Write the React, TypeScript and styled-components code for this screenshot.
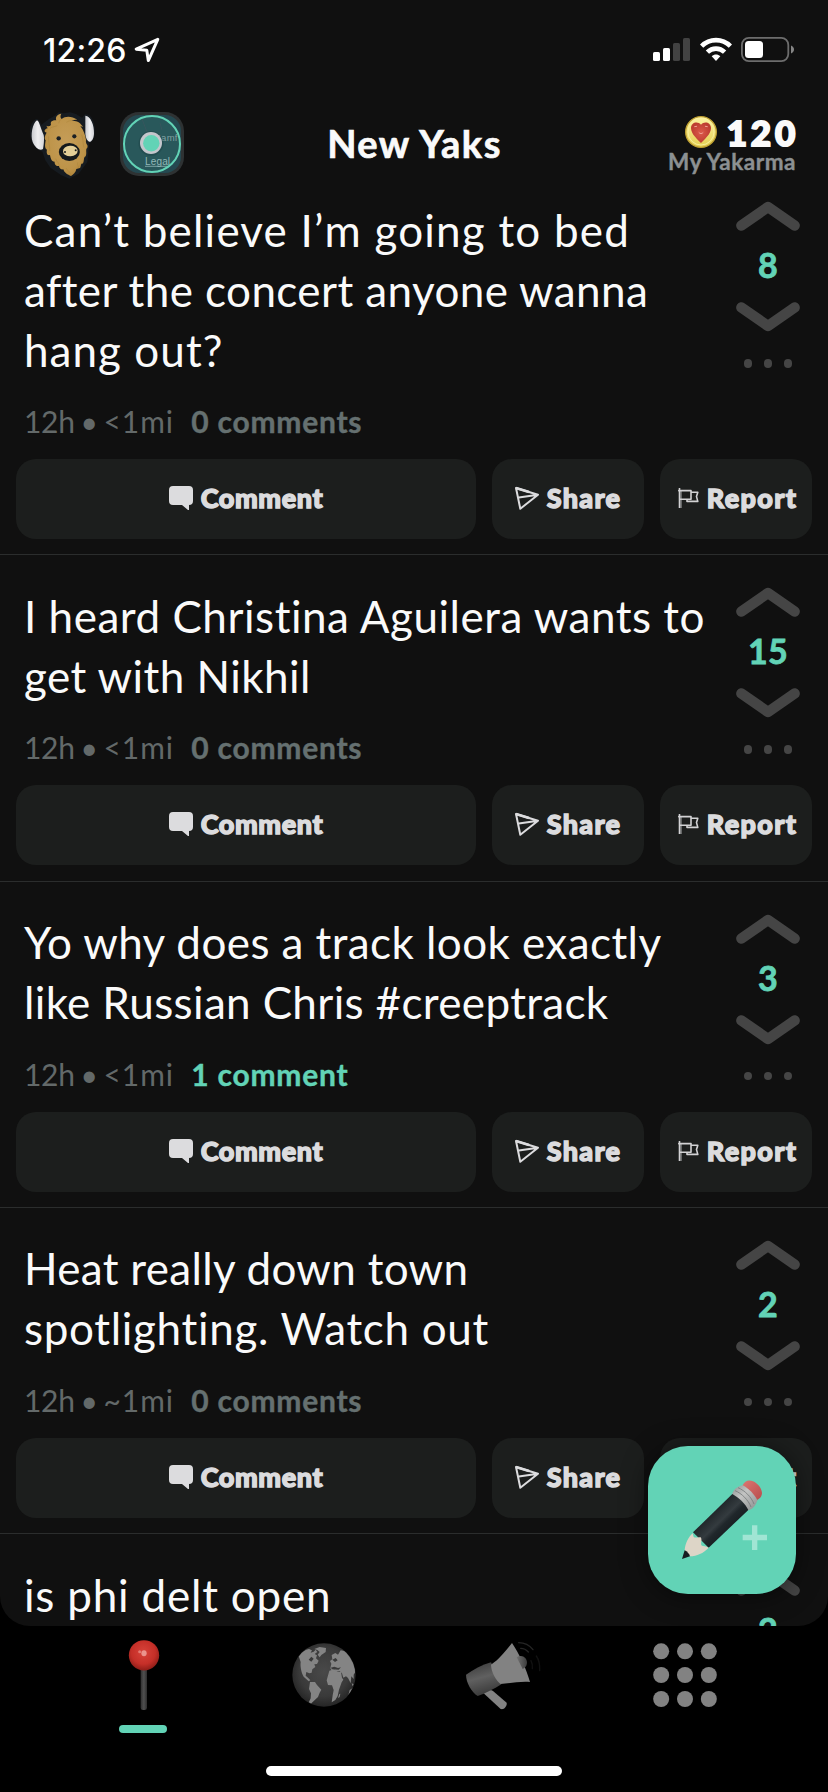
import React from 'react';
import styled, { createGlobalStyle } from 'styled-components';

const mint = '#62d3b6';
const panel = '#101010';

const GlobalStyle = createGlobalStyle`
  * { box-sizing: border-box; }
  body {
    margin: 0;
    background: #000;
    color: #fafafa;
    font-family: Lato, 'Open Sans', sans-serif;
    font-variant-ligatures: none;
  }
  svg { display: block; flex: none; }
`;

const Screen = styled.div`
  display: flex;
  flex-direction: column;
  width: 828px;
  height: 1792px;
  overflow: hidden;
  background: #000;
`;

const Panel = styled.main`
  position: relative;
  display: flex;
  flex-direction: column;
  height: 1626px;
  flex: none;
  overflow: hidden;
  background: ${panel};
  border-radius: 0 0 30px 30px;
`;

/* ---------- status bar ---------- */

const StatusBar = styled.div`
  display: flex;
  align-items: flex-start;
  height: 88px;
  flex: none;
  padding: 37px 34px 0 43px;
`;

const Clock = styled.span`
  margin-right: 7px;
  font: 500 32px/27px Inter, sans-serif;
  letter-spacing: 0.2px;
  color: #fff;
`;

const StatusIcons = styled.div`
  display: flex;
  gap: 9.5px;
  margin-left: auto;
`;

/* ---------- header ---------- */

const Header = styled.header`
  display: grid;
  grid-template-columns: 1fr auto 1fr;
  align-items: center;
  height: 112px;
  flex: none;
  padding: 0 32px 0 28px;
`;

const HeaderLeft = styled.div`
  display: flex;
  align-items: center;
  gap: 24px;
`;

const Title = styled.h1`
  margin: 0 0 3px 5px;
  font-size: 38px;
  font-weight: 700;
  line-height: 46px;
  letter-spacing: 1.5px;
  -webkit-text-stroke: 0.7px #fafafa;
`;

const Karma = styled.div`
  display: flex;
  flex-direction: column;
  align-items: flex-end;
  padding-top: 1px;
`;

const KarmaScore = styled.div`
  display: flex;
  align-items: center;
  gap: 10px;
  height: 34px;
  font-size: 35px;
  font-weight: 900;
  line-height: 32px;
  letter-spacing: 3.8px;
  margin-right: -3px;
  -webkit-text-stroke: 2px #fafafa;
`;

const KarmaLabel = styled.div`
  font-size: 22.5px;
  font-weight: 700;
  line-height: 26px;
  letter-spacing: 0.55px;
  color: #8c9092;
  -webkit-text-stroke: 0.4px #8c9092;
`;

/* ---------- feed ---------- */

const Feed = styled.section`
  flex: 1;
  min-height: 0;
  overflow: hidden;
`;

const FeedList = styled.div`
  margin-top: -31px;
`;

const PostCard = styled.article`
  border-bottom: 1px solid #2b2d2d;
  padding-bottom: 15.33px;
`;

const PostBody = styled.div`
  display: flex;
  justify-content: space-between;
  padding: 29px 28px 18px 24px;
`;

const Message = styled.p`
  margin: 0 0 21.5px;
  padding-top: 1.5px;
  font-size: 44px;
  line-height: 60px;
`;

const Line = styled.span<{ $track: number }>`
  display: block;
  white-space: nowrap;
  letter-spacing: ${(p) => p.$track}px;
`;

const Meta = styled.div`
  display: flex;
  font-size: 30px;
  line-height: 40px;
  color: #636969;
  white-space: nowrap;
`;

const Age = styled.span`
  letter-spacing: -0.3px;
  word-spacing: -1.6px;
`;

const Distance = styled.span`
  margin-left: 6px;
  letter-spacing: 0.9px;
`;

const CommentCount = styled.span<{ $active: boolean }>`
  margin-left: 17.5px;
  font-weight: 700;
  letter-spacing: 0.75px;
  color: ${(p) => (p.$active ? mint : '#657070')};
  -webkit-text-stroke: 0.4px ${(p) => (p.$active ? mint : '#657070')};
`;

const Votes = styled.div`
  display: flex;
  flex-direction: column;
  align-items: center;
  width: 64px;
  height: 176px;
  margin-top: 3px;
`;

const Score = styled.span`
  height: 71px;
  font-size: 34px;
  font-weight: 700;
  line-height: 67px;
  letter-spacing: 0.4px;
  color: ${mint};
  -webkit-text-stroke: 0.8px ${mint};
`;

const MoreDots = styled.div`
  display: flex;
  gap: 11.5px;
  margin-top: 27px;
`;

const MoreDot = styled.i`
  width: 8.5px;
  height: 8.5px;
  border-radius: 50%;
  background: #454545;
`;

const Actions = styled.div`
  display: grid;
  grid-template-columns: 460px 152px 152px;
  gap: 16px;
  padding: 0 16px;
`;

const Action = styled.button<{ $track: number }>`
  display: flex;
  align-items: center;
  justify-content: center;
  gap: 8px;
  height: 80px;
  padding: 0 0 2px;
  border: 0;
  border-radius: 20px;
  background: #1c1e1d;
  color: #dcdcde;
  font: 900 27px/32px Lato, sans-serif;
  letter-spacing: ${(p) => p.$track}px;
  -webkit-text-stroke: 1.4px #dcdcde;
`;

/* ---------- compose button and tab bar ---------- */

const Compose = styled.button`
  position: absolute;
  right: 32px;
  bottom: 32px;
  width: 148px;
  height: 148px;
  padding: 0;
  border: 0;
  border-radius: 40px;
  background: ${mint};
  box-shadow: 0 2px 26px rgba(0, 0, 0, 0.5);
`;

const TabBar = styled.nav`
  display: grid;
  grid-template-columns: repeat(4, 180px);
  justify-content: center;
  height: 140px;
  flex: none;
  padding-top: 11px;
`;

const Tab = styled.div`
  display: flex;
  flex-direction: column;
  align-items: center;
  gap: 12px;
`;

const TabUnderline = styled.div`
  width: 48px;
  height: 8px;
  margin-right: 2px;
  border-radius: 4px;
  background: ${mint};
`;

const HomeIndicator = styled.div`
  width: 296px;
  height: 10px;
  flex: none;
  margin: 0 auto;
  border-radius: 5px;
  background: #fff;
`;

/* ---------- drawings ---------- */

const LocationArrow = () => (
  <svg width="26" height="26" viewBox="0 0 26 26" fill="none" stroke="#fff" strokeWidth="3" strokeLinejoin="round">
    <path d="M23.8 2.3 2.2 12.2 12.8 13.3 14.3 23.6Z" />
  </svg>
);

const Signal = () => (
  <svg width="37" height="25" viewBox="0 0 37 25">
    <rect x="0" y="15" width="7" height="9" rx="1.6" fill="#fff" />
    <rect x="10" y="11" width="7" height="13" rx="1.6" fill="#fff" />
    <rect x="20" y="6" width="7" height="18" rx="1.6" fill="#424242" />
    <rect x="30" y="1" width="7" height="23" rx="1.6" fill="#424242" />
  </svg>
);

const Wifi = () => (
  <svg width="32" height="25" viewBox="0 0 32 25" fill="none" stroke="#fff" strokeWidth="4.6">
    <path d="M1.6 9.2C9.6 1.1 22.4 1.1 30.4 9.2" />
    <path d="M7.4 15.2C12.2 10.4 19.8 10.4 24.6 15.2" />
    <path d="M11.7 19.2C14.2 17 17.8 17 20.3 19.2L16 24Z" fill="#fff" stroke="none" />
  </svg>
);

const Battery = () => (
  <svg width="53" height="25" viewBox="0 0 53 25">
    <rect x="0.9" y="0.9" width="46.4" height="23.2" rx="7" fill="none" stroke="#6d6d6d" strokeWidth="1.8" />
    <rect x="4" y="4" width="18" height="17" rx="3.5" fill="#fff" />
    <path d="M50 8.5C52 9.3 53 10.8 53 12.5C53 14.2 52 15.7 50 16.5Z" fill="#858585" />
  </svg>
);

const Yak = () => (
  <svg width="68" height="68" viewBox="84 61 204 204" overflow="visible">
    <defs>
      <radialGradient id="fur" cx="0.5" cy="0.45" r="0.65">
        <stop offset="0" stopColor="#c59d58" />
        <stop offset="0.7" stopColor="#bd9348" />
        <stop offset="1" stopColor="#a97b2f" />
      </radialGradient>
      <linearGradient id="horn" x1="0" x2="1">
        <stop offset="0" stopColor="#c9cbcf" />
        <stop offset="0.5" stopColor="#efeff1" />
        <stop offset="1" stopColor="#d5d5d8" />
      </linearGradient>
    </defs>
    <path
      d="M108 88C92 96 86 122 92 144C97 164 108 178 127 186L136 212 152 235 184 257 208 267 236 252 262 217 268 160C280 157 287 136 284 112C281 88 270 72 255 74L246 84 228 73 210 68 190 71 176 68 164 78 148 87 134 98 124 106C120 94 116 86 108 88Z"
      fill="#161b20"
    />
    <path d="M111 92C119 96 121 115 131 136C133 145 132 164 129 178C120 184 106 176 98 157C91 138 97 101 111 92Z" fill="url(#horn)" />
    <path d="M256 78C272 79 283 106 282 132C281 151 272 159 265 155C258 149 255 138 256 121Z" fill="url(#horn)" />
    <path
      d="M184 72C179 81 183 86 185 88C196 78 216 79 232 90C222 90 216 92 214 93C233 92 243 101 249 112L241 109C251 121 256 137 258 150C256 166 266 163 262 174C255 179 262 189 257 200C249 202 254 216 248 222C242 218 244 229 240 235L229 238C227 249 220 255 213 259C203 255 193 250 190 239C184 241 178 236 177 229C168 231 163 223 164 216C153 215 152 205 150 196C140 199 139 187 141 180C132 176 136 160 137 152C131 145 136 135 140 129C130 128 133 118 143 116L139 108C148 112 152 109 153 104C150 96 158 91 169 92C165 82 172 73 184 72Z"
      fill="url(#fur)"
    />
    <g fill="none" stroke="#a87f38" strokeWidth="2" opacity="0.65">
      <path d="M150 116C158 110 166 111 172 108M146 140C145 160 150 169 149 184M245 135C251 150 248 164 252 174M167 207C170 217 178 220 178 229M233 218C231 229 237 230 235 235M198 235C203 245 211 246 213 257M184 88C178 92 178 96 176 101M215 93C207 92 205 96 199 98" />
    </g>
    <circle cx="176" cy="146" r="6.5" fill="#1b2024" />
    <circle cx="223" cy="140" r="6.3" fill="#1b2024" />
    <ellipse cx="208" cy="187" rx="31.5" ry="27" fill="#14191c" />
    <ellipse cx="211" cy="184" rx="22" ry="16" fill="#e3cf98" transform="rotate(-4 211 184)" />
    <circle cx="195" cy="187" r="3" fill="#181b1e" />
    <circle cx="227" cy="182" r="3" fill="#181b1e" />
  </svg>
);

const MapThumb = () => (
  <svg width="64" height="64" viewBox="0 0 64 64" fontFamily="Liberation Sans, sans-serif">
    <defs>
      <clipPath id="mapClip">
        <rect x="3" y="3" width="58" height="58" rx="16" />
      </clipPath>
    </defs>
    <rect width="64" height="64" rx="19" fill="#2e3233" />
    <g clipPath="url(#mapClip)">
      <rect x="3" y="3" width="58" height="58" fill="#244850" />
      <circle cx="32" cy="32" r="28" fill="#29585b" />
      <path d="M22 7L27 20M40 11L42 18" stroke="#39565e" strokeWidth="0.9" />
      <text x="36" y="28.5" fontSize="9.5" letterSpacing="0.3" fill="#80a0a1">Jamf</text>
      <text x="25" y="53" fontSize="10" letterSpacing="0.15" fill="#91b7b6">Legal</text>
      <path d="M25 54.3H49.5" stroke="#91b7b6" strokeWidth="0.8" />
    </g>
    <circle cx="32" cy="32" r="28" fill="none" stroke={mint} strokeWidth="2" />
    <circle cx="31" cy="31.5" r="12.5" fill="#193c40" opacity="0.35" />
    <circle cx="31" cy="31" r="11" fill="#c4c6cc" />
    <circle cx="31.3" cy="31.2" r="8.2" fill={mint} />
  </svg>
);

const Coin = () => (
  <svg width="32" height="32" viewBox="0 0 96 96">
    <defs>
      <linearGradient id="coin" x1="0" y1="0" x2="0" y2="1">
        <stop offset="0" stopColor="#fdf3a4" />
        <stop offset="1" stopColor="#e4cf51" />
      </linearGradient>
      <radialGradient id="heart">
        <stop offset="0" stopColor="#dc5a4b" />
        <stop offset="1" stopColor="#bd3d31" />
      </radialGradient>
    </defs>
    <circle cx="48" cy="48" r="46" fill="url(#coin)" stroke="#c0a132" strokeWidth="4" />
    <circle cx="48" cy="48" r="39" fill="none" stroke="#f8ef9d" strokeWidth="3" />
    <path d="M48 81C39 71 18 55 18 36C18 18 39 14 48 26C57 14 78 18 78 36C78 55 57 71 48 81Z" fill="url(#heart)" />
    <path d="M29 32L35 31M61 31L67 32M42 50C45 54 51 54 54 50" fill="none" stroke="#f0a093" strokeWidth="3" strokeLinecap="round" />
  </svg>
);

const Chevron = ({ down = false }: { down?: boolean }) => (
  <svg width="64" height="30" viewBox="0 0 64 30" fill="none" stroke="#454545" strokeWidth="10.5" strokeLinecap="round" strokeLinejoin="round">
    <path d={down ? 'M5.4 5.5 32 24 58.6 5.5' : 'M5.4 24.5 32 6 58.6 24.5'} />
  </svg>
);

const CommentIcon = () => (
  <svg width="24" height="24" viewBox="0 0 24 24" fill="#dcdcde" stroke="none">
    <path d="M4 0H20A4 4 0 0 1 24 4V15A4 4 0 0 1 20 19V24H19L13 19H4A4 4 0 0 1 0 15V4A4 4 0 0 1 4 0Z" />
  </svg>
);

const ShareIcon = () => (
  <svg width="24" height="24" viewBox="0 0 24 24" fill="none" stroke="#dcdcde" strokeWidth="2" strokeLinejoin="round">
    <path d="M1 2 23 8.8 5.3 22.8ZM3.8 11.5 23 8.8" />
    <path d="M1 2 14 6" strokeWidth="2.8" />
  </svg>
);

const ReportIcon = () => (
  <svg width="24" height="24" viewBox="0 0 24 24" fill="none" stroke="#d2d2d4" strokeWidth="1.6" strokeLinejoin="round">
    <path d="M4.5 2V22M3.3 4.6H16V13.2H4.5M16 6.2H22.8L21.5 10.6 22.8 15.4H12V13.2" />
    <path d="M3 4.6H6V22" strokeWidth="0.8" />
  </svg>
);

const Pencil = () => (
  <svg width="148" height="148" viewBox="144 138 444 444">
    <defs>
      <linearGradient id="pencilBody" x1="0.3" y1="0.3" x2="0.7" y2="0.7">
        <stop offset="0" stopColor="#1a2023" />
        <stop offset="0.5" stopColor="#343b3f" />
        <stop offset="0.65" stopColor="#20272b" />
        <stop offset="1" stopColor="#161c20" />
      </linearGradient>
      <linearGradient id="ferrule" x1="0" y1="0" x2="1" y2="1">
        <stop offset="0" stopColor="#8f9292" />
        <stop offset="0.4" stopColor="#c4c5c4" />
        <stop offset="1" stopColor="#8a8d8e" />
      </linearGradient>
      <linearGradient id="eraser" x1="0" y1="0" x2="1" y2="1">
        <stop offset="0" stopColor="#dc7772" />
        <stop offset="1" stopColor="#b84c4c" />
      </linearGradient>
    </defs>
    <path d="M464 376V450M428 412.500H501" stroke="#a0e5d4" strokeWidth="16" />
    <path d="M427 257C434 242 447 238 459 244C473 250 484 263 486 278C486 289 479 297 469 300Z" fill="url(#eraser)" />
    <path d="M396 284C400 269 414 258 428 256C447 266 464 284 472 301C468 316 458 328 445 331Z" fill="url(#ferrule)" />
    <path d="M405 272C425 280 445 300 453 321M414 263C435 272 454 291 462 312" fill="none" stroke="#777b7c" strokeWidth="2.500" />
    <path d="M397 282C415 292 436 311 445 330L326 443 279 397Z" fill="url(#pencilBody)" />
    <path d="M278 400C265 411 256 430 254 450L269 469C292 468 309 460 326 443C319 438 309 440 304 436C302 428 307 418 302 412C293 411 286 415 281 411Z" fill="#ddd5c7" />
    <path d="M254 451 246 477 270 469C267 461 262 455 254 451Z" fill="#161c20" />
  </svg>
);

const PinIcon = () => (
  <svg width="76" height="76" viewBox="78 81 228 228">
    <defs>
      <radialGradient id="pinBall" cx="0.48" cy="0.4" r="0.6">
        <stop offset="0" stopColor="#d8433a" />
        <stop offset="0.65" stopColor="#c52f28" />
        <stop offset="1" stopColor="#8e1d18" />
      </radialGradient>
      <linearGradient id="stem" x1="0" x2="1">
        <stop offset="0" stopColor="#303030" />
        <stop offset="0.5" stopColor="#505050" />
        <stop offset="1" stopColor="#2d2d2d" />
      </linearGradient>
    </defs>
    <rect x="182" y="170" width="19" height="130" rx="7" fill="url(#stem)" />
    <circle cx="192" cy="136" r="45.500" fill="url(#pinBall)" />
    <ellipse cx="192" cy="130" rx="8" ry="9" fill="#f0a9a3" opacity="0.8" />
    <circle cx="179" cy="125" r="4.500" fill="#e98d86" opacity="0.8" />
  </svg>
);

const GlobeIcon = () => (
  <svg width="76" height="76" viewBox="618 81 228 228">
    <defs>
      <radialGradient id="sea" cx="0.5" cy="0.45" r="0.55">
        <stop offset="0" stopColor="#494949" />
        <stop offset="0.7" stopColor="#3a3a3a" />
        <stop offset="1" stopColor="#252525" />
      </radialGradient>
      <clipPath id="globeClip">
        <circle cx="732" cy="195" r="94" />
      </clipPath>
    </defs>
    <circle cx="732" cy="195" r="95" fill="url(#sea)" />
    <g fill="#848484" clipPath="url(#globeClip)">
      <path d="M656 138C664 126 676 119 687 117L696 121 692 128 701 125 707 119 712 126 704 132 711 136 708 145 716 152 711 162 703 163 706 171 697 178 695 188 688 190 679 186 677 197 684 203 691 211 686 214 671 200C665 190 660 171 662 156Z" />
      <path d="M703 117 719 111 738 114 737 126 724 135 719 142 713 134 719 126 712 120Z" />
      <path d="M690 216 705 216 711 225 724 239 719 248 714 261 702 272 692 282 685 280 692 265 693 250 687 237Z" />
      <path d="M782 121 797 124C814 137 825 160 826 186L821 194 821 207 814 199 812 220 804 204 798 199 790 203 786 190 779 184 768 185 763 178 756 183 751 175 754 161 750 153 757 148 755 135 766 129 774 134Z" />
      <path d="M748 182 763 178 773 186 783 186 786 203 790 209 785 217 777 239 773 258 766 270 755 277 758 256 761 240 756 226 744 225 740 211Z" />
      <path d="M778 252 781 251 779 261 774 264ZM809 240 818 234 822 240 815 251 804 259ZM815 220 821 223 818 229Z" />
    </g>
    <path d="M752 173 763 170 774 174 783 172 776 179 757 178ZM757 149 765 156 773 151 767 144ZM694 140 701 146 694 155 686 149Z" fill="#3a3a3a" />
  </svg>
);

const MegaphoneIcon = () => (
  <svg width="76" height="76" viewBox="138 81 228 228">
    <defs>
      <linearGradient id="barrel" x1="0.3" y1="0" x2="0.6" y2="1">
        <stop offset="0" stopColor="#3c3c3c" />
        <stop offset="0.45" stopColor="#606060" />
        <stop offset="1" stopColor="#363636" />
      </linearGradient>
      <linearGradient id="knob" x1="0" x2="1">
        <stop offset="0" stopColor="#727272" />
        <stop offset="1" stopColor="#3d3d3d" />
      </linearGradient>
    </defs>
    <path d="M190 249C199 240 211 237 219 243L260 278C262 288 252 300 242 297Z" fill="#828282" />
    <path d="M138 194C160 179 185 165 213 157L244 223C222 237 197 250 173 258C155 247 138 218 138 194Z" fill="url(#barrel)" />
    <path d="M213 164C240 146 258 121 276 99C298 132 318 173 330 216C300 213 266 221 242 222C230 214 213 186 213 164Z" fill="#828282" />
    <path d="M290 142C307 132 321 144 321 159C320 169 315 174 308 177Z" fill="url(#knob)" />
    <g fill="none" stroke="#252525" strokeWidth="4" strokeLinecap="round">
      <path d="M296 98C312 98 328 105 339 119M302 115C311 115 319 119 325 126" />
      <path d="M349 138C356 148 360 162 359 182M333 152C337 160 338 168 337 176" stroke="#111" />
    </g>
  </svg>
);

const GridIcon = () => (
  <svg width="76" height="76" viewBox="678 81 228 228" fill="#828282">
    {[124, 195, 267].map((y) =>
      [723.5, 795, 866.5].map((x) => <circle key={`${x}-${y}`} cx={x} cy={y} r="24" />),
    )}
  </svg>
);

/* ---------- data ---------- */

type PostData = {
  lines: [text: string, track: number][];
  distance: string;
  comments: number;
  score: number;
};

const posts: PostData[] = [
  {
    lines: [
      ['Can’t believe I’m going to bed', 1.2],
      ['after the concert anyone wanna', 0.4],
      ['hang out?', 1.05],
    ],
    distance: '<1mi',
    comments: 0,
    score: 8,
  },
  {
    lines: [
      ['I heard Christina Aguilera wants to', 0.52],
      ['get with Nikhil', 0.45],
    ],
    distance: '<1mi',
    comments: 0,
    score: 15,
  },
  {
    lines: [
      ['Yo why does a track look exactly', 0.42],
      ['like Russian Chris #creeptrack', 0.35],
    ],
    distance: '<1mi',
    comments: 1,
    score: 3,
  },
  {
    lines: [
      ['Heat really down town', 0.32],
      ['spotlighting. Watch out', 0.68],
    ],
    distance: '~1mi',
    comments: 0,
    score: 2,
  },
  { lines: [['is phi delt open', 0.8]], distance: '<1mi', comments: 0, score: 2 },
];

const Post = ({ lines, distance, comments, score }: PostData) => (
  <PostCard>
    <PostBody>
      <div>
        <Message>
          {lines.map(([text, track]) => (
            <Line key={text} $track={track}>{text}</Line>
          ))}
        </Message>
        <Meta>
          <Age>12h •</Age>
          <Distance>{distance}</Distance>
          <CommentCount $active={comments > 0}>
            {comments} {comments === 1 ? 'comment' : 'comments'}
          </CommentCount>
        </Meta>
      </div>
      <Votes>
        <Chevron />
        <Score>{score}</Score>
        <Chevron down />
        <MoreDots>
          <MoreDot />
          <MoreDot />
          <MoreDot />
        </MoreDots>
      </Votes>
    </PostBody>
    <Actions>
      <Action $track={0.6}><CommentIcon />Comment</Action>
      <Action $track={1.3}><ShareIcon />Share</Action>
      <Action $track={1.3}><ReportIcon />Report</Action>
    </Actions>
  </PostCard>
);

export default function App() {
  return (
    <>
      <GlobalStyle />
      <Screen>
        <Panel>
          <StatusBar>
            <Clock>12:26</Clock>
            <LocationArrow />
            <StatusIcons>
              <Signal />
              <Wifi />
              <Battery />
            </StatusIcons>
          </StatusBar>
          <Header>
            <HeaderLeft>
              <Yak />
              <MapThumb />
            </HeaderLeft>
            <Title>New Yaks</Title>
            <Karma>
              <KarmaScore><Coin />120</KarmaScore>
              <KarmaLabel>My Yakarma</KarmaLabel>
            </Karma>
          </Header>
          <Feed>
            <FeedList>
              {posts.map((post) => (
                <Post key={post.lines[0][0]} {...post} />
              ))}
            </FeedList>
          </Feed>
          <Compose aria-label="Compose"><Pencil /></Compose>
        </Panel>
        <TabBar>
          <Tab><PinIcon /><TabUnderline /></Tab>
          <Tab><GlobeIcon /></Tab>
          <Tab><MegaphoneIcon /></Tab>
          <Tab><GridIcon /></Tab>
        </TabBar>
        <HomeIndicator />
      </Screen>
    </>
  );
}
